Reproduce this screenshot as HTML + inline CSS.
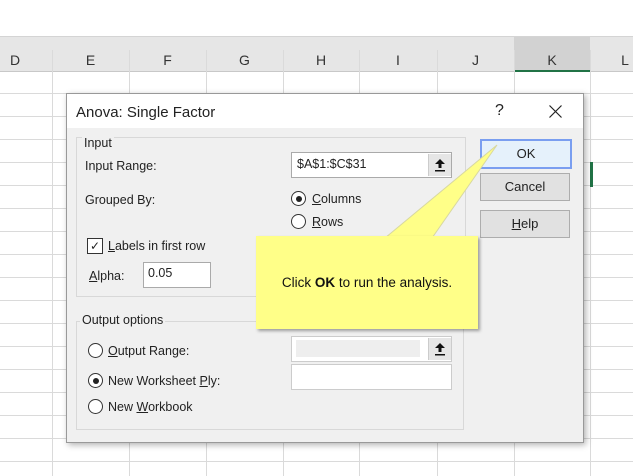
<!DOCTYPE html><html><head><style>
body{margin:0;width:633px;height:476px;position:relative;overflow:hidden;background:#fff;font-family:"Liberation Sans",sans-serif;font-size:12.5px;color:#222}
.a{position:absolute}
.hd{left:0;top:36px;width:633px;height:34px;background:#e6e6e6;border-top:1px solid #d4d4d4;border-bottom:1px solid #c8c8c8}
.col{top:36px;height:34px;line-height:48px;text-align:center;font-size:14px;color:#333}
.vl{width:1px;background:#dadada}
.hl{height:1px;left:0;width:633px;background:#dadada}
.dlg{left:66px;top:93px;width:516px;height:348px;background:#f0f0f0;border:1px solid #999;box-shadow:2px 2px 6px rgba(0,0,0,.3)}
.tb{left:0;top:0;width:516px;height:34px;background:#fff}
.grp{border:1px solid #d8d8d8}
.in{background:#fff;border:1px solid #aaa}
.btn{width:88px;height:26px;background:#e1e1e1;border:1px solid #adadad;text-align:center;line-height:26px;font-size:13px}
.rad{width:13px;height:13px;border:1px solid #333;border-radius:50%;background:#fff}
.dot{left:3.5px;top:3.5px;width:6px;height:6px;border-radius:50%;background:#222}
.up{width:22px;height:22px;background:#e6e6e6;border-left:1px solid #ccc}
u{text-decoration:underline}
</style></head><body>
<div class="a hd"></div>
<div class="a" style="left:514px;top:37px;width:76px;height:33px;background:#d2d2d2;border-bottom:2px solid #217346"></div>
<div class="a col" style="left:0;width:30px">D</div>
<div class="a col" style="left:52px;width:77px">E</div>
<div class="a col" style="left:129px;width:77px">F</div>
<div class="a col" style="left:206px;width:77px">G</div>
<div class="a col" style="left:283px;width:76px">H</div>
<div class="a col" style="left:359px;width:78px">I</div>
<div class="a col" style="left:437px;width:77px">J</div>
<div class="a col" style="left:514px;width:76px">K</div>
<div class="a col" style="left:610px;width:30px">L</div>
<div class="a vl" style="left:52px;top:50px;height:426px"></div>
<div class="a vl" style="left:129px;top:50px;height:426px"></div>
<div class="a vl" style="left:206px;top:50px;height:426px"></div>
<div class="a vl" style="left:283px;top:50px;height:426px"></div>
<div class="a vl" style="left:359px;top:50px;height:426px"></div>
<div class="a vl" style="left:437px;top:50px;height:426px"></div>
<div class="a vl" style="left:514px;top:50px;height:426px"></div>
<div class="a vl" style="left:590px;top:50px;height:426px"></div>
<div class="a hl" style="top:93px"></div><div class="a hl" style="top:116px"></div><div class="a hl" style="top:139px"></div><div class="a hl" style="top:162px"></div><div class="a hl" style="top:185px"></div><div class="a hl" style="top:208px"></div><div class="a hl" style="top:231px"></div><div class="a hl" style="top:254px"></div><div class="a hl" style="top:277px"></div><div class="a hl" style="top:300px"></div><div class="a hl" style="top:323px"></div><div class="a hl" style="top:346px"></div><div class="a hl" style="top:369px"></div><div class="a hl" style="top:392px"></div><div class="a hl" style="top:415px"></div><div class="a hl" style="top:438px"></div><div class="a hl" style="top:461px"></div>
<div class="a" style="left:590px;top:162px;width:3px;height:25px;background:#217346"></div>
<div class="a dlg">
<div class="a tb"></div>
<div class="a" style="left:9px;top:10px;font-size:15px">Anova: Single Factor</div>
<div class="a" style="left:428px;top:8px;font-size:16px">?</div>
<svg class="a" style="left:482px;top:11px" width="13" height="13"><path d="M0.5 0.5L12.5 12.5M12.5 0.5L0.5 12.5" stroke="#222" stroke-width="1.2"/></svg>
<div class="a grp" style="left:9px;top:43px;width:388px;height:158px"></div>
<div class="a" style="left:15px;top:42px;background:#f0f0f0;padding:0 2px">Input</div>
<div class="a" style="left:18px;top:65px">Input Range:</div>
<div class="a in" style="left:224px;top:58px;width:159px;height:24px"><span class="a" style="left:5px;top:4px">$A$1:$C$31</span><div class="a up" style="right:0;top:1px"><svg width="22" height="22"><path d="M11 5L6 10H9.5V14H12.5V10H16Z" fill="#111"/><rect x="6" y="16" width="10" height="1.5" fill="#111"/></svg></div></div>
<div class="a" style="left:18px;top:99px">Grouped By:</div>
<div class="a rad" style="left:224px;top:97px"><div class="a dot"></div></div>
<div class="a" style="left:245px;top:98px"><u>C</u>olumns</div>
<div class="a rad" style="left:224px;top:120px"></div>
<div class="a" style="left:245px;top:121px"><u>R</u>ows</div>
<div class="a" style="left:20px;top:144px;width:14px;height:14px;border:1px solid #333;background:#fff;font-size:12px;line-height:14px;text-align:center">✓</div>
<div class="a" style="left:41px;top:145px"><u>L</u>abels in first row</div>
<div class="a" style="left:22px;top:175px"><u>A</u>lpha:</div>
<div class="a in" style="left:76px;top:168px;width:66px;height:24px"><span class="a" style="left:4px;top:3px">0.05</span></div>
<div class="a grp" style="left:9px;top:227px;width:386px;height:107px"></div>
<div class="a" style="left:13px;top:219px;background:#f0f0f0;padding:0 2px">Output options</div>
<div class="a rad" style="left:21px;top:249px"></div>
<div class="a" style="left:41px;top:250px"><u>O</u>utput Range:</div>
<div class="a in" style="left:224px;top:242px;width:159px;height:24px;border-color:#ccc"><div class="a" style="left:4px;top:3px;width:124px;height:17px;background:#eee"></div><div class="a up" style="right:0;top:1px"><svg width="22" height="22"><path d="M11 5L6 10H9.5V14H12.5V10H16Z" fill="#111"/><rect x="6" y="16" width="10" height="1.5" fill="#111"/></svg></div></div>
<div class="a rad" style="left:21px;top:279px"><div class="a dot"></div></div>
<div class="a" style="left:41px;top:280px">New Worksheet <u>P</u>ly:</div>
<div class="a in" style="left:224px;top:270px;width:159px;height:24px;border-color:#ccc"></div>
<div class="a rad" style="left:21px;top:305px"></div>
<div class="a" style="left:41px;top:306px">New <u>W</u>orkbook</div>
<div class="a btn" style="left:413px;top:45px;background:#e5f1fb;border:2px solid #7a9ef0">OK</div>
<div class="a btn" style="left:413px;top:79px">Cancel</div>
<div class="a btn" style="left:413px;top:116px"><u>H</u>elp</div>
</div>
<svg class="a" style="left:0;top:0" width="633" height="476"><polygon points="385,238 497,145 432,238" fill="#ffff88" stroke="#d8d8a0"/></svg>
<div class="a" style="left:256px;top:236px;width:222px;height:93px;background:#ffff88;box-shadow:2px 2px 3px rgba(0,0,0,.35);text-align:center;line-height:93px;font-size:13.5px;color:#111">Click <b>OK</b> to run the analysis.</div>
</body></html>
